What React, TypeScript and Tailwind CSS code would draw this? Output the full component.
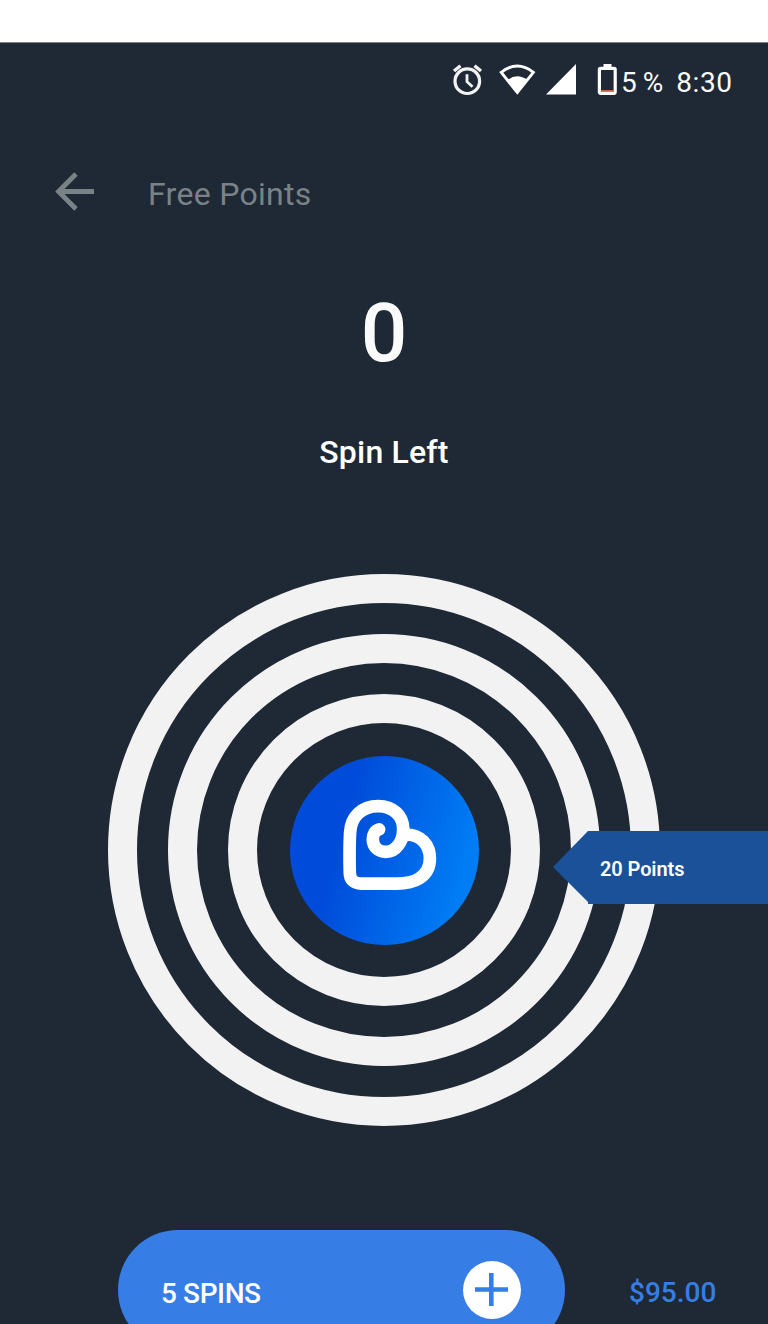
import React from "react";

function StatusBar() {
  return (
    <div className="flex h-[106px] shrink-0 items-start pl-[452px] pt-[21px] text-[28px] leading-none text-[#fafafa]">
      <svg className="h-[34px] w-[168px] shrink-0" viewBox="452 63 168 34" fill="none">
        <circle cx="467.3" cy="81.2" r="12.3" stroke="#f3f3f3" strokeWidth="3.2" />
        <path d="M467 74.3v7.4l5.5 5" stroke="#f3f3f3" strokeWidth="2.8" />
        <path d="M454 71l6.5-5.3M474.5 65.7l6.5 5.3" stroke="#f3f3f3" strokeWidth="3.4" />
        <path d="M501.2 72.3q16-12.4 32.2 0L517.3 92.5z" stroke="#fff" strokeWidth="2.9" />
        <path d="M507.5 80q9.8-7.5 19.8 0l-10 13.5z" fill="#fff" />
        <path d="M576 64v30.5h-30z" fill="#fff" />
        <rect x="599.4" y="68.3" width="15.8" height="25" rx="1.2" stroke="#fff" strokeWidth="3.2" />
        <path d="M603.5 64h8v3h-8z" fill="#fff" />
        <path d="M601 90.2h12.5v1.8H601z" fill="#ef7152" />
      </svg>
      <span className="ml-[1px] mt-[6px] whitespace-nowrap">5<span className="ml-[6px] inline-block">%</span></span>
      <span className="ml-[13px] mt-[6px] tracking-[0.6px]">8:30</span>
    </div>
  );
}

function Logo() {
  return (
    <svg className="h-[189px] w-[189px]" viewBox="31 33 566 566" fill="none">
      <defs>
        <linearGradient id="disc" gradientUnits="userSpaceOnUse" x1="175" y1="280" x2="550" y2="380">
          <stop stopColor="#004bd9" />
          <stop offset="1" stopColor="#007cf4" />
        </linearGradient>
      </defs>
      <circle cx="314" cy="316" r="283" fill="url(#disc)" />
      <path
        d="M298 253C286 256 279 267 279 283C279 305 296 320 318 320C349 320 370 288 370 252C370 211 339 183 295 183C245 183 213 216 211 262C209 300 209 345 210 381C210 403 222 415 244 415H350C379 415 402 410 419 399C439 386 450 367 450 340C450 299 423 268 378 268"
        stroke="#fff"
        strokeWidth="38"
        strokeLinecap="round"
        strokeLinejoin="round"
      />
      <path d="M386 236L389 252L382 291L362 306L370 250z" fill="#fff" />
    </svg>
  );
}

function Wheel() {
  return (
    <div className="relative mt-[103px] flex justify-center">
      <div className="rounded-full border-[29px] border-[#f2f2f2] p-[31px]">
        <div className="rounded-full border-[29px] border-[#f2f2f2] p-[31px]">
          <div className="flex h-[312px] w-[312px] items-center justify-center rounded-full border-[29px] border-[#f2f2f2]">
            <Logo />
          </div>
        </div>
      </div>
      <div className="absolute right-0 top-[257px] flex h-[73px] w-[215px] items-center bg-[#1a5199] pl-[47px] text-[20px] font-semibold leading-none text-white [clip-path:polygon(0_36px,35px_0,100%_0,100%_100%,35px_100%,35px_71px)]">
        <span className="mt-[3px] whitespace-nowrap tracking-[-0.1px]">20 Points</span>
      </div>
    </div>
  );
}

export default function App() {
  return (
    <div className="flex h-[1324px] w-[768px] flex-col overflow-hidden border-t-[42px] border-white bg-[#1f2935] font-['Roboto',sans-serif] text-white">
      <div className="-mb-px h-px shrink-0 bg-[#7d838a]" />
      <StatusBar />
      <header className="flex h-[88px] shrink-0 items-start pl-[55px] pt-[24px] text-[#798387]">
        <svg className="h-[39px] w-[39px]" viewBox="0 0 39 39" fill="none" stroke="currentColor" strokeWidth="4.8">
          <path d="M39 19.5H4M21 2L3.5 19.5L21 37" />
        </svg>
        <h1 className="ml-[54px] mt-[6px] whitespace-nowrap text-[32px] font-normal leading-none tracking-[0.3px]">Free Points</h1>
      </header>
      <section className="flex h-[235px] shrink-0 flex-col items-center pt-[56px]">
        <div className="text-[82px] font-medium leading-none text-[#fafafa]">0</div>
        <div className="mt-[62px] whitespace-nowrap text-[32px] font-medium leading-none tracking-[0.2px]">Spin Left</div>
      </section>
      <Wheel />
      <div className="mt-[104px] flex h-[120px] shrink-0 items-center pl-[118px]">
        <button className="flex h-[120px] w-[447px] items-center justify-between rounded-full bg-[#367de5] pl-[43px] pr-[44px] text-[28px] font-medium leading-none">
          <span className="mt-[8px] whitespace-nowrap tracking-[-0.4px]">5 SPINS</span>
          <svg className="h-[58px] w-[58px]" viewBox="0 0 58 58">
            <circle cx="29" cy="29" r="29" fill="#fff" />
            <path d="M12 28.5h33M28.3 12v33" stroke="#367de5" strokeWidth="4.6" />
          </svg>
        </button>
        <span className="ml-[64px] mt-[5px] text-[28px] font-medium leading-none text-[#367de5]">$95.00</span>
      </div>
    </div>
  );
}
